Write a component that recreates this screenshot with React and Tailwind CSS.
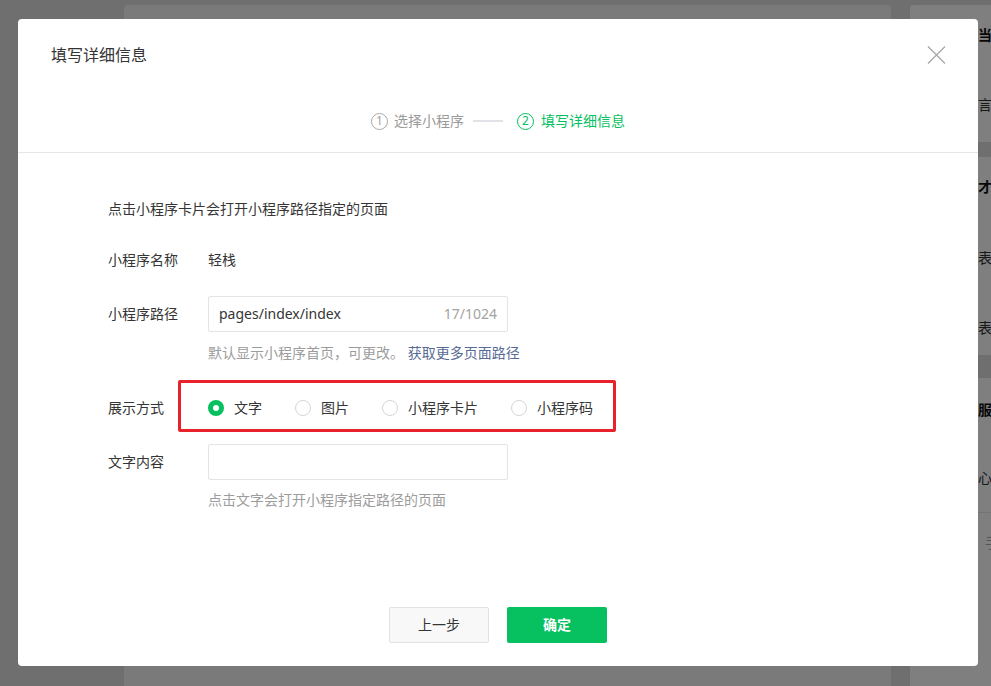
import React from "react";

function Radio({ checked, label }) {
  return (
    <div className="flex items-center">
      {checked ? (
        <span className="w-4 h-4 rounded-full bg-[#07c160] flex items-center justify-center">
          <span className="w-[6px] h-[6px] rounded-full bg-white" />
        </span>
      ) : (
        <span className="w-4 h-4 rounded-full border border-[#d6d6d6] bg-white" />
      )}
      <span className="ml-[10px] text-[14px] leading-[20px] text-[#353535]">{label}</span>
    </div>
  );
}

export default function App() {
  return (
    <div className="relative w-[991px] h-[686px] overflow-hidden bg-[#dedede] font-['Noto_Sans','Noto_Sans_CJK_SC',sans-serif]">
      {/* background page */}
      <div className="flex h-full">
        <div className="w-[124px] shrink-0" />
        <div className="w-[767px] shrink-0 pt-[5px]">
          <div className="h-full rounded-t-[4px] bg-[#f4f4f4]" />
        </div>
        <div className="ml-[19px] flex-1 pt-[5px] flex flex-col text-[14px] leading-[20px]">
          <div className="h-[137px] bg-white pl-[68px] pt-[20px] rounded-tl-[4px]">
            <div className="font-bold text-[#111]">当</div>
            <div className="mt-[50px] text-[#333]">言</div>
          </div>
          <div className="mt-[15px] h-[198px] bg-white pl-[68px] pt-[20px]">
            <div className="font-bold text-[#111]">才</div>
            <div className="mt-[51px] text-[#333]">表</div>
            <div className="mt-[50px] text-[#333]">表</div>
          </div>
          <div className="mt-[23px] flex-1 bg-white">
            <div className="pl-[68px] pt-[22px] font-bold text-[#111] whitespace-nowrap">服务</div>
            <div className="pl-[68px] mt-[48px] text-[#333]">心</div>
            <div className="mt-[24px] border-t border-[#e8e8e8] pl-[75px] pt-[20px] text-[#aaa]">手</div>
          </div>
        </div>
      </div>
      {/* overlay */}
      <div className="absolute inset-0 bg-black/50" />

      {/* modal */}
      <div className="absolute left-[18px] top-[19px] w-[960px] h-[647px] rounded-[4px] bg-white flex flex-col">
        <div className="relative pt-[25px] pb-[20px] border-b border-[#e7e7e7]">
          <div className="pl-[33px] text-[16px] leading-[22px] text-[#353535]">填写详细信息</div>
          <div className="absolute right-[32px] top-[27px] w-[19px] h-[18px]">
            <svg width="19" height="18" viewBox="0 0 19 18">
              <path d="M1 0.5 L18 17.5 M18 0.5 L1 17.5" stroke="#a8a8a8" strokeWidth="1.4" fill="none" />
            </svg>
          </div>
          <div className="mt-[44px] h-[22px] flex items-center justify-center text-[14px] leading-[20px]">
            <span className="w-[17px] h-[17px] rounded-full border border-[#a8a8a8] flex items-center justify-center text-[12px] leading-none text-[#a0a0a0]">1</span>
            <span className="ml-[6px] text-[#9a9a9a]">选择小程序</span>
            <span className="ml-[9px] w-[30px] h-[2px] bg-[#e1e3e8]" />
            <span className="ml-[14px] w-[17px] h-[17px] rounded-full border border-[#07c160] flex items-center justify-center text-[12px] leading-none text-[#07c160]">2</span>
            <span className="ml-[7px] text-[#07c160]">填写详细信息</span>
          </div>
        </div>

        <div className="flex-1 flex flex-col pl-[90px] text-[14px] leading-[20px] text-[#353535]">
          <div className="mt-[46px]">点击小程序卡片会打开小程序路径指定的页面</div>

          <div className="mt-[31px] flex items-center">
            <div className="w-[100px]">小程序名称</div>
            <div>轻栈</div>
          </div>

          <div className="mt-[26px] flex items-center">
            <div className="w-[100px]">小程序路径</div>
            <div className="w-[300px] h-[36px] border border-[#e4e4e4] rounded-[2px] flex items-center justify-between px-[10px]">
              <span className="text-[#353535]">pages/index/index</span>
              <span className="text-[#a3a3a3]">17/1024</span>
            </div>
          </div>
          <div className="mt-[11px] pl-[100px] text-[#9c9c9c]">
            默认显示小程序首页，可更改。 <span className="text-[#576b95]">获取更多页面路径</span>
          </div>

          <div className="relative mt-[35px] flex items-center">
            <div className="w-[100px]">展示方式</div>
            <div className="flex items-center gap-[33px]">
              <Radio checked label="文字" />
              <Radio label="图片" />
              <Radio label="小程序卡片" />
              <Radio label="小程序码" />
            </div>
            <div className="absolute left-[70px] top-[-18px] w-[438px] h-[52px] border-[3px] border-[#e8212b] rounded-[2px] pointer-events-none" />
          </div>

          <div className="mt-[26px] flex items-center">
            <div className="w-[100px]">文字内容</div>
            <div className="w-[300px] h-[36px] border border-[#e4e4e4] rounded-[2px]" />
          </div>
          <div className="mt-[10px] pl-[100px] text-[#9c9c9c]">点击文字会打开小程序指定路径的页面</div>

          <div className="flex-1" />
          <div className="-ml-[90px] mb-[23px] flex justify-center gap-[18px]">
            <div className="w-[100px] h-[36px] rounded-[2px] border border-[#e2e2e2] bg-[#f8f8f8] flex items-center justify-center text-[#353535]">上一步</div>
            <div className="w-[100px] h-[36px] rounded-[2px] bg-[#07c160] flex items-center justify-center text-white font-bold">确定</div>
          </div>
        </div>
      </div>
    </div>
  );
}
